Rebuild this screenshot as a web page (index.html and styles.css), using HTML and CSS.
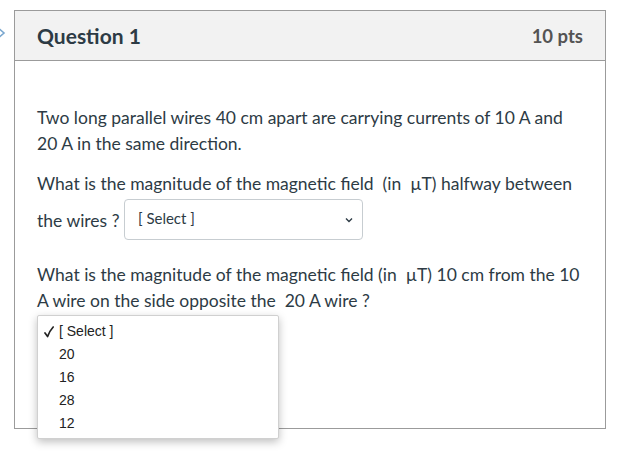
FILE: index.html
```html
<!DOCTYPE html>
<html lang="en">
<head>
    <meta charset="UTF-8">
    <title>Question 1</title>
    <link rel="stylesheet" href="styles.css">
</head>
<body>
    <svg class="flag" width="12" height="16" viewBox="0 0 12 16">
        <path d="M-4 1 L4 8 L-4 15" fill="none" stroke="#7aa7cf" stroke-width="1.6"/>
    </svg>
    <div class="question">
        <div class="question-header">
            <span class="question-title">Question 1</span>
            <span class="question-points">10 pts</span>
        </div>
        <div class="question-body">
            <p>Two long parallel wires 40 cm apart are carrying currents of 10 A and 20 A in the same direction.</p>
            <p>What is the magnitude of the magnetic field&nbsp; (in &nbsp;&micro;T) halfway between the wires ? <span class="select"><span class="select-text">[ Select ]</span>
                <svg width="8" height="6" viewBox="0 0 8 6"><path d="M1 1.5 L4 4.5 L7 1.5" fill="none" stroke="#2d3b45" stroke-width="1.4"/></svg></span></p>
            <p class="last">What is the magnitude of the magnetic field (in &nbsp;&micro;T) 10 cm from the 10 A wire on the side opposite the&nbsp; 20 A wire ?</p>
            <div class="answer">
                <span class="select"></span>
                <ul class="options">
                    <li class="checked">
                        <svg class="tick" width="10" height="12" viewBox="0 0 10 12"><path d="M1 7 L3.6 10.6 Q5.5 5 9.2 1" fill="none" stroke="#222" stroke-width="1.7" stroke-linecap="round" stroke-linejoin="round"/></svg>
                        <span>[ Select ]</span>
                    </li>
                    <li>20</li>
                    <li>16</li>
                    <li>28</li>
                    <li>12</li>
                </ul>
            </div>
        </div>
    </div>
</body>
</html>
```
FILE: styles.css
```css
body {
    margin: 0;
    padding-bottom: 22px;
    background: #fff;
    font-family: Lato, "Noto Sans", sans-serif;
    color: #2d3b45;
    position: relative;
}
.flag {
    position: absolute;
    left: 0;
    top: 25px;
}
.question {
    margin: 10px 0 0 14px;
    width: 590px;
    border: 1px solid #9b9b9b;
}
.question-header {
    height: 49px;
    background: #f2f2f2;
    border-bottom: 1px solid #9b9b9b;
    display: flex;
    align-items: center;
    justify-content: space-between;
    padding: 0 22px 0 22px;
    font-weight: bold;
}
.question-title {
    font-size: 21px;
    color: #2d3b45;
}
.question-points {
    font-size: 18.5px;
    color: #545454;
}
.question-body {
    padding: 44px 23px 0 22px;
    height: 323px;
    font-size: 17.5px;
    line-height: 26px;
}
.question-body p {
    margin: 0 0 14px;
}
.question-body p.last {
    margin-bottom: 0;
}
.select {
    display: inline-flex;
    align-items: center;
    justify-content: space-between;
    box-sizing: border-box;
    width: 239px;
    height: 41px;
    margin: 2px 0 8px;
    padding: 0 9px 0 13px;
    border: 1px solid #c7cdd1;
    border-radius: 4px;
    vertical-align: middle;
    font-size: 15px;
    line-height: 16px;
}
.select-text {
    padding-bottom: 4px;
}
.answer {
    position: relative;
    z-index: 2;
}
.options {
    position: absolute;
    left: 0;
    top: 1px;
    width: 240px;
    margin: 0;
    padding: 4px 0 3px;
    list-style: none;
    background: #fff;
    border: 1px solid #d0d0d0;
    border-radius: 2px;
    box-shadow: 0 3px 9px rgba(0, 0, 0, 0.25);
    font-family: "Liberation Sans", Arial, sans-serif;
    font-size: 14px;
    line-height: 23px;
    color: #222;
}
.options li {
    padding-left: 21px;
}
.options li.checked {
    display: flex;
    align-items: center;
    padding-left: 6px;
}
.tick {
    margin-right: 5px;
}
```
